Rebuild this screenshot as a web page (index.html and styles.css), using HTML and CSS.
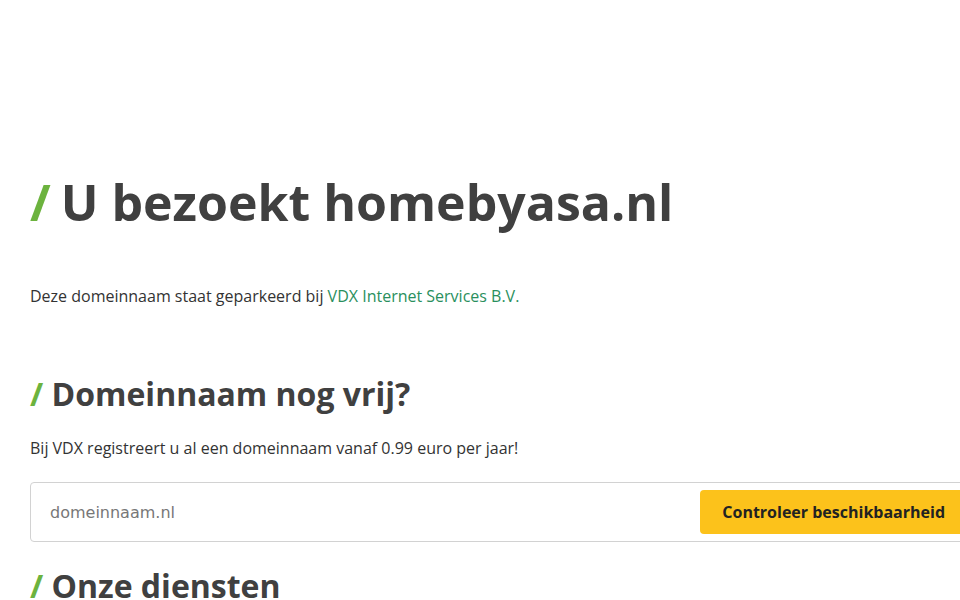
FILE: index.html
```html
<!DOCTYPE html>
<html lang="nl">
  <head>
    <meta charset="UTF-8" />
    <meta name="viewport" content="width=device-width, initial-scale=1.0" />
    <title>homebyasa.nl</title>
    <link rel="stylesheet" href="styles.css">
  </head>
  <body>
    <div class="page">
      <h1 class="title"><span class="slash">/</span>U bezoekt homebyasa.nl</h1>
      <p class="intro">Deze domeinnaam staat geparkeerd bij <a href="#">VDX Internet Services B.V.</a></p>

      <h2 class="section-title"><span class="slash">/</span> Domeinnaam nog vrij?</h2>
      <p class="lead">Bij VDX registreert u al een domeinnaam vanaf 0.99 euro per jaar!</p>
      <form class="search">
        <input type="text" placeholder="domeinnaam.nl">
        <button type="button">Controleer beschikbaarheid</button>
      </form>

      <h2 class="section-title"><span class="slash">/</span> Onze diensten</h2>
    </div>
  </body>
</html>
```

FILE: styles.css
```css
* {
  box-sizing: border-box;
}
html,
body {
  overflow: hidden;
}
body {
  margin: 0;
  background: #fff;
  color: #333;
  font-family: "Open Sans", sans-serif;
  font-size: 16px;
  line-height: 24px;
}
.page {
  padding: 172px 30px 0;
}
.slash {
  color: #6cb33e;
}
.title {
  margin: 0;
  font-size: 50px;
  line-height: 1.2;
  font-weight: 700;
  color: #404040;
}
.title .slash {
  margin-right: 10px;
}
.intro {
  margin: 52px 0 0;
}
.intro a {
  color: #2a8f5d;
  text-decoration: none;
}
.section-title {
  margin: 67px 0 0;
  font-size: 32px;
  line-height: 1.2;
  font-weight: 700;
  color: #404040;
}
.lead {
  margin: 23px 0 0;
}
.search {
  display: flex;
  align-items: center;
  width: 945px;
  height: 60px;
  margin-top: 22px;
  padding: 7px 7px 7px 0;
  border: 1px solid #d2d2d2;
  border-radius: 4px;
}
.search input {
  flex: 1;
  height: 44px;
  padding: 0 19px;
  border: none;
  outline: none;
  font-family: "DejaVu Sans", sans-serif;
  font-size: 16px;
  color: #333;
}
.search input::placeholder {
  color: #777;
}
.search button {
  height: 44px;
  padding: 0 22px;
  border: none;
  border-radius: 4px;
  background: #fcc21b;
  color: #222;
  font-family: "Open Sans", sans-serif;
  font-size: 16px;
  font-weight: 700;
}
.search + .section-title {
  margin-top: 25px;
}
```
